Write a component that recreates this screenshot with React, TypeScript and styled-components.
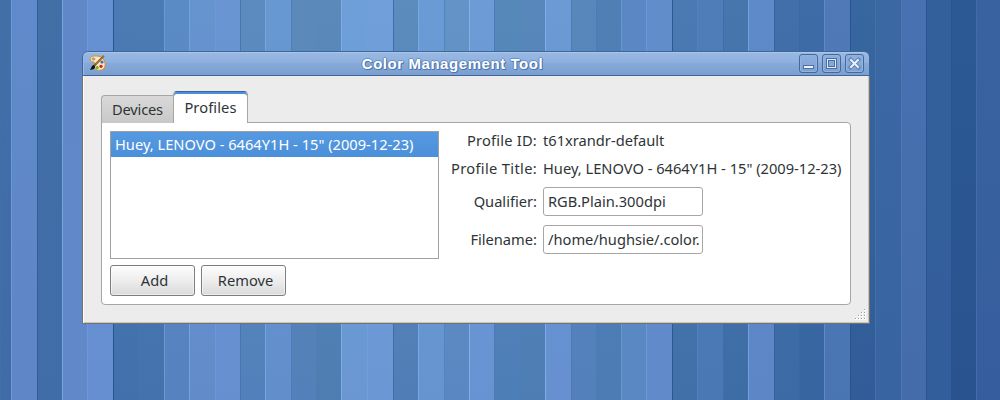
import React from 'react';
import styled, { createGlobalStyle, css } from 'styled-components';

const GlobalStyle = createGlobalStyle`
  *, *::before, *::after { box-sizing: border-box; }
  body { margin: 0; overflow: hidden; font-family: "Noto Sans", "Open Sans", sans-serif; font-size: 14.67px; color: #2e3436; }
`;

const Desktop = styled.main`
  display: grid;
  width: 1000px;
  height: 400px;
  overflow: hidden;
`;

const Wallpaper = styled.div`
  grid-area: 1 / 1;
  display: flex;
`;

const Stripe = styled.div<{ $w: number; $top: string; $bottom: string; $edge?: string }>`
  flex: none;
  width: ${p => p.$w}px;
  background: linear-gradient(${p => p.$top}, ${p => p.$bottom});
  border-left: ${p => (p.$edge ? `1px solid ${p.$edge}` : 'none')};
`;

const Window = styled.section`
  grid-area: 1 / 1;
  width: 788px;
  height: 273px;
  margin: 51px 0 0 82px;
  display: flex;
  flex-direction: column;
  border-radius: 6px 6px 0 0;
  overflow: hidden;
  position: relative;
`;

const TitleBar = styled.header`
  flex: none;
  height: 25px;
  display: flex;
  align-items: center;
  padding: 0 5px 0 6px;
  border: 1px solid #3f6699;
  border-radius: 6px 6px 0 0;
  box-shadow: inset 0 1px #a9c5e9, inset 1px 0 #9bbae2;
  background: linear-gradient(#9ab9e4 0, #8fb0de 45%, #86a9d8 50%, #7a9fd0 100%);
`;

const Title = styled.h1`
  flex: 1;
  margin: 0;
  text-align: center;
  font: bold 15px/20px "Liberation Sans", sans-serif;
  letter-spacing: 0.56px;
  color: #fff;
  text-shadow: 1px 1px #4d76ad, -1px 0 #5f88bd, 0 -1px #6a91c6, 1px 0 #5b84ba, 0 1px #5b84ba;
`;

const WindowControls = styled.div`
  display: flex;
  gap: 4px;
`;

const ControlButton = styled.button`
  width: 19px;
  height: 19px;
  padding: 0;
  display: grid;
  place-items: center;
  border: 1px solid #46699c;
  border-radius: 3px;
  background: linear-gradient(#8fb0de, #7ba0d2);
  box-shadow: inset 0 0 0 1px #93b3df;
`;

const Body = styled.div`
  flex: 1;
  padding: 15px 17px 17px 18px;
  background: #ececec;
  border: 1px solid #77736d;
  border-top: 0;
  box-shadow: inset 1px 0 #fff, inset -1px -1px #c8c5c0;
`;

const Tabs = styled.nav`
  height: 32px;
  display: flex;
  align-items: flex-end;
  position: relative;
  z-index: 1;
`;

const Tab = styled.button<{ $active?: boolean }>`
  font: inherit;
  color: inherit;
  padding: 0;
  text-align: center;
  border: 1px solid #a6a6a6;
  ${p =>
    p.$active
      ? css`
          width: 75px;
          height: 32px;
          line-height: 29px;
          padding-bottom: 1px;
          margin-left: -1px;
          border-top: 1px solid #3a6494;
          border-bottom: 0;
          border-radius: 4px 4px 0 0;
          background: #fff;
          box-shadow: inset 0 2px #4a90d9;
          letter-spacing: 0.1px;
        `
      : css`
          width: 73px;
          height: 28px;
          line-height: 27px;
          border-bottom: 0;
          border-radius: 4px 0 0 0;
          background: linear-gradient(#d9d9d9, #c8c8c8);
          letter-spacing: -0.2px;
        `}
`;

const Page = styled.div`
  width: 750px;
  height: 183px;
  margin-top: -1px;
  padding: 8px;
  display: flex;
  border: 1px solid #a6a6a6;
  border-radius: 0 4px 4px 4px;
  background: #fff;
`;

const ListPane = styled.div`
  flex: none;
  width: 329px;
  display: flex;
  flex-direction: column;
  gap: 6px;
`;

const ProfileList = styled.div`
  height: 128px;
  border: 1px solid #a0a0a0;
`;

const ProfileRow = styled.div`
  height: 25px;
  padding-left: 4px;
  line-height: 25px;
  white-space: nowrap;
  color: #fff;
  background: linear-gradient(#559ae1, #4a8fd9);
`;

const Actions = styled.div`
  display: flex;
  gap: 6px;
`;

const Button = styled.button`
  width: 85px;
  height: 31px;
  padding: 0 0 1px 4px;
  font: inherit;
  line-height: 28px;
  color: inherit;
  border: 1px solid #7d7d7d;
  border-radius: 3px;
  background: linear-gradient(#fdfdfd, #ededed 50%, #dadada);
  box-shadow: inset 0 0 0 1px rgba(255, 255, 255, 0.5);
`;

const Details = styled.dl`
  flex: none;
  margin: -5px 0 0 10px;
  display: grid;
  grid-template-columns: 88px 299px;
  grid-template-rows: 28px 28px 38px 38px;
  column-gap: 6px;
  align-items: center;
  align-content: start;
`;

const Label = styled.dt<{ $spacing?: number }>`
  text-align: right;
  white-space: nowrap;
  letter-spacing: ${p => p.$spacing ?? 0}px;
`;

const Value = styled.dd`
  margin: 0;
  white-space: nowrap;
`;

const Entry = styled.input`
  display: block;
  width: 160px;
  height: 29px;
  padding: 0 0 0 4px;
  font: inherit;
  color: inherit;
  border: 1px solid #a6a6a6;
  border-radius: 3px;
  background: #fff;
  outline: 0;
`;

const ResizeGrip = styled.svg`
  position: absolute;
  right: 4px;
  bottom: 4px;
`;

type StripeSpec = [number, string, string, string?];

const stripes: StripeSpec[] = [
  [11, '#426fa8', '#3f6ba7', '#426fa8'],
  [26, '#608acb', '#5f86c6', '#6c9ad5'],
  [25, '#426fa6', '#406ca8', '#2f5e9a'],
  [25, '#6088c9', '#6189c9', '#78a5de'],
  [26, '#6590d1', '#658fd0', '#6e99d8'],
  [25, '#4c7bb4', '#4170aa', '#245590'],
  [26, '#4c7bb4', '#4472ac'],
  [25, '#5b8bc4', '#5682bf', '#6a9ad0'],
  [26, '#6694cf', '#628bca', '#75a3dc'],
  [25, '#6996d2', '#658fcf', '#6b99d3'],
  [25, '#5c8cbf', '#5280ba', '#4676b0'],
  [26, '#6898d1', '#628fcc', '#76a4dc'],
  [25, '#5b8aba', '#5380b8', '#4e7eb7'],
  [25, '#5a89ba', '#4e7db2'],
  [26, '#6e9fd8', '#6a97d2', '#7cade6'],
  [26, '#719fda', '#6b98d5', '#70a0da'],
  [25, '#5b8cbd', '#507db5', '#3e6ea9'],
  [26, '#6b9bd4', '#6594ce', '#77a8df'],
  [25, '#6493c7', '#5a87c1', '#5384bd'],
  [25, '#6c9bd6', '#6793d2', '#80b1eb'],
  [26, '#5788ba', '#4e7eb6', '#4b7bb3'],
  [25, '#5787bb', '#4e7db3'],
  [26, '#6b9ad4', '#6690d0', '#7cade9'],
  [25, '#5887bb', '#5380bb', '#4b7cb5'],
  [25, '#507fb6', '#4d7cb5', '#4a7bb2'],
  [25, '#5b88c4', '#5a88c3', '#6998cf'],
  [26, '#618eca', '#608aca', '#6b9ada'],
  [25, '#4b7ab2', '#416fa8', '#295995'],
  [26, '#4e7db7', '#4978b4', '#5282ba'],
  [25, '#4676ab', '#3e6da6', '#3f6fa6'],
  [26, '#5e8aca', '#5c86c5', '#73a1dd'],
  [25, '#426fa9', '#3c6aa4', '#34649e'],
  [25, '#3e6ca6', '#37659f', '#3a689f'],
  [26, '#4f7ab7', '#4a75b3', '#5f8ac3'],
  [25, '#38669f', '#315c97', '#28558f'],
  [26, '#3b68a3', '#3864a2', '#4370a8'],
  [25, '#4771b0', '#446cab', '#4d78b5'],
  [25, '#33609a', '#335e9c', '#285592'],
  [25, '#2c5894', '#28538e', '#285391'],
  [24, '#3963a0', '#365e9e', '#426dab'],
];

const PaletteIcon = () => (
  <svg width="17" height="17" viewBox="0 0 17 17">
    <path
      d="M3.8 1.2C1.9 1.7.8 3.2 1.2 5c.5 1.7 2.4 1.9 4 2.2.8.5.3 1.8-.1 2.8C4.600 13 7 15.300 10.400 15.300c3.600 0 5.800-2.300 5.800-5.300 0-3.100-1.400-6.500-4.300-8-2.100-1.100-5.700-1.300-8.100-.8Z"
      fill="#f5e6c4"
      stroke="#d08f2c"
    />
    <ellipse cx="4.500" cy="4" rx="1.500" ry="1.200" fill="#89a9d6" stroke="#c98d3d" strokeWidth=".6" />
    <circle cx="13" cy="7" r="1.600" fill="#3e6eb4" />
    <circle cx="12" cy="11.300" r="1.600" fill="#d9231b" />
    <circle cx="8.200" cy="12.400" r="1.500" fill="#63b51c" />
    <circle cx="8.500" cy="4" r="1.200" fill="#fff1bd" />
    <path d="M5.500 10.500 14.800.8" stroke="#7a4a10" strokeWidth="1.900" />
    <path d="M6.500 9.300 14.600 1" stroke="#d89a45" strokeWidth=".8" />
    <path d="M.5 14.500c2-.4 1.500-4 4.200-4.600l1.600 1.500C6 14 3 15.100.5 14.500Z" fill="#111" />
  </svg>
);

const MinimizeIcon = () => (
  <svg width="13" height="13" viewBox="0 0 13 13" shapeRendering="crispEdges">
    <path d="M1 8h11v4H1z" fill="#4a70a6" />
    <path d="M2 9h9v2H2z" fill="#edf2f9" />
  </svg>
);

const MaximizeIcon = () => (
  <svg width="13" height="13" viewBox="0 0 13 13" shapeRendering="crispEdges">
    <path d="M1 1h11v11H1z" fill="#4a70a6" />
    <path d="M2 2h9v9H2z" fill="#dfe9f6" />
    <path d="M3 3h7v7H3z" fill="#4a70a6" />
    <path d="M4 4h5v5H4z" fill="#87a9d7" />
  </svg>
);

const CloseIcon = () => (
  <svg width="13" height="13" viewBox="0 0 13 13" fill="none">
    <path d="m2.700 2.700 7.600 7.600m0-7.600-7.600 7.600" stroke="#567cb2" strokeWidth="3.800" strokeLinecap="square" />
    <path d="m3 3 7 7m0-7-7 7" stroke="#edf2f9" strokeWidth="2" strokeLinecap="square" />
  </svg>
);

const gripDots = [
  [9, 0],
  [6, 3], [9, 3],
  [3, 6], [6, 6], [9, 6],
  [0, 9], [3, 9], [6, 9], [9, 9],
];

export default function App() {
  return (
    <>
      <GlobalStyle />
      <Desktop>
        <Wallpaper>
          {stripes.map(([w, top, bottom, edge], i) => (
            <Stripe key={i} $w={w} $top={top} $bottom={bottom} $edge={edge} />
          ))}
        </Wallpaper>
        <Window>
          <TitleBar>
            <PaletteIcon />
            <Title>Color Management Tool</Title>
            <WindowControls>
              <ControlButton aria-label="Minimize"><MinimizeIcon /></ControlButton>
              <ControlButton aria-label="Maximize"><MaximizeIcon /></ControlButton>
              <ControlButton aria-label="Close"><CloseIcon /></ControlButton>
            </WindowControls>
          </TitleBar>
          <Body>
            <Tabs>
              <Tab>Devices</Tab>
              <Tab $active>Profiles</Tab>
            </Tabs>
            <Page>
              <ListPane>
                <ProfileList>
                  <ProfileRow>Huey, LENOVO - 6464Y1H - 15" (2009-12-23)</ProfileRow>
                </ProfileList>
                <Actions>
                  <Button>Add</Button>
                  <Button>Remove</Button>
                </Actions>
              </ListPane>
              <Details>
                <Label $spacing={0.2}>Profile ID:</Label>
                <Value>t61xrandr-default</Value>
                <Label $spacing={0.33}>Profile Title:</Label>
                <Value>Huey, LENOVO - 6464Y1H - 15" (2009-12-23)</Value>
                <Label>Qualifier:</Label>
                <Value><Entry readOnly value="RGB.Plain.300dpi" /></Value>
                <Label>Filename:</Label>
                <Value><Entry readOnly value="/home/hughsie/.color." /></Value>
              </Details>
            </Page>
          </Body>
          <ResizeGrip width="11" height="11" shapeRendering="crispEdges">
            {gripDots.map(([x, y]) => (
              <g key={`${x}-${y}`}>
                <rect x={x} y={y} width="2" height="2" fill="#fff" />
                <rect x={x} y={y} width="1" height="1" fill="#999" />
              </g>
            ))}
          </ResizeGrip>
        </Window>
      </Desktop>
    </>
  );
}
